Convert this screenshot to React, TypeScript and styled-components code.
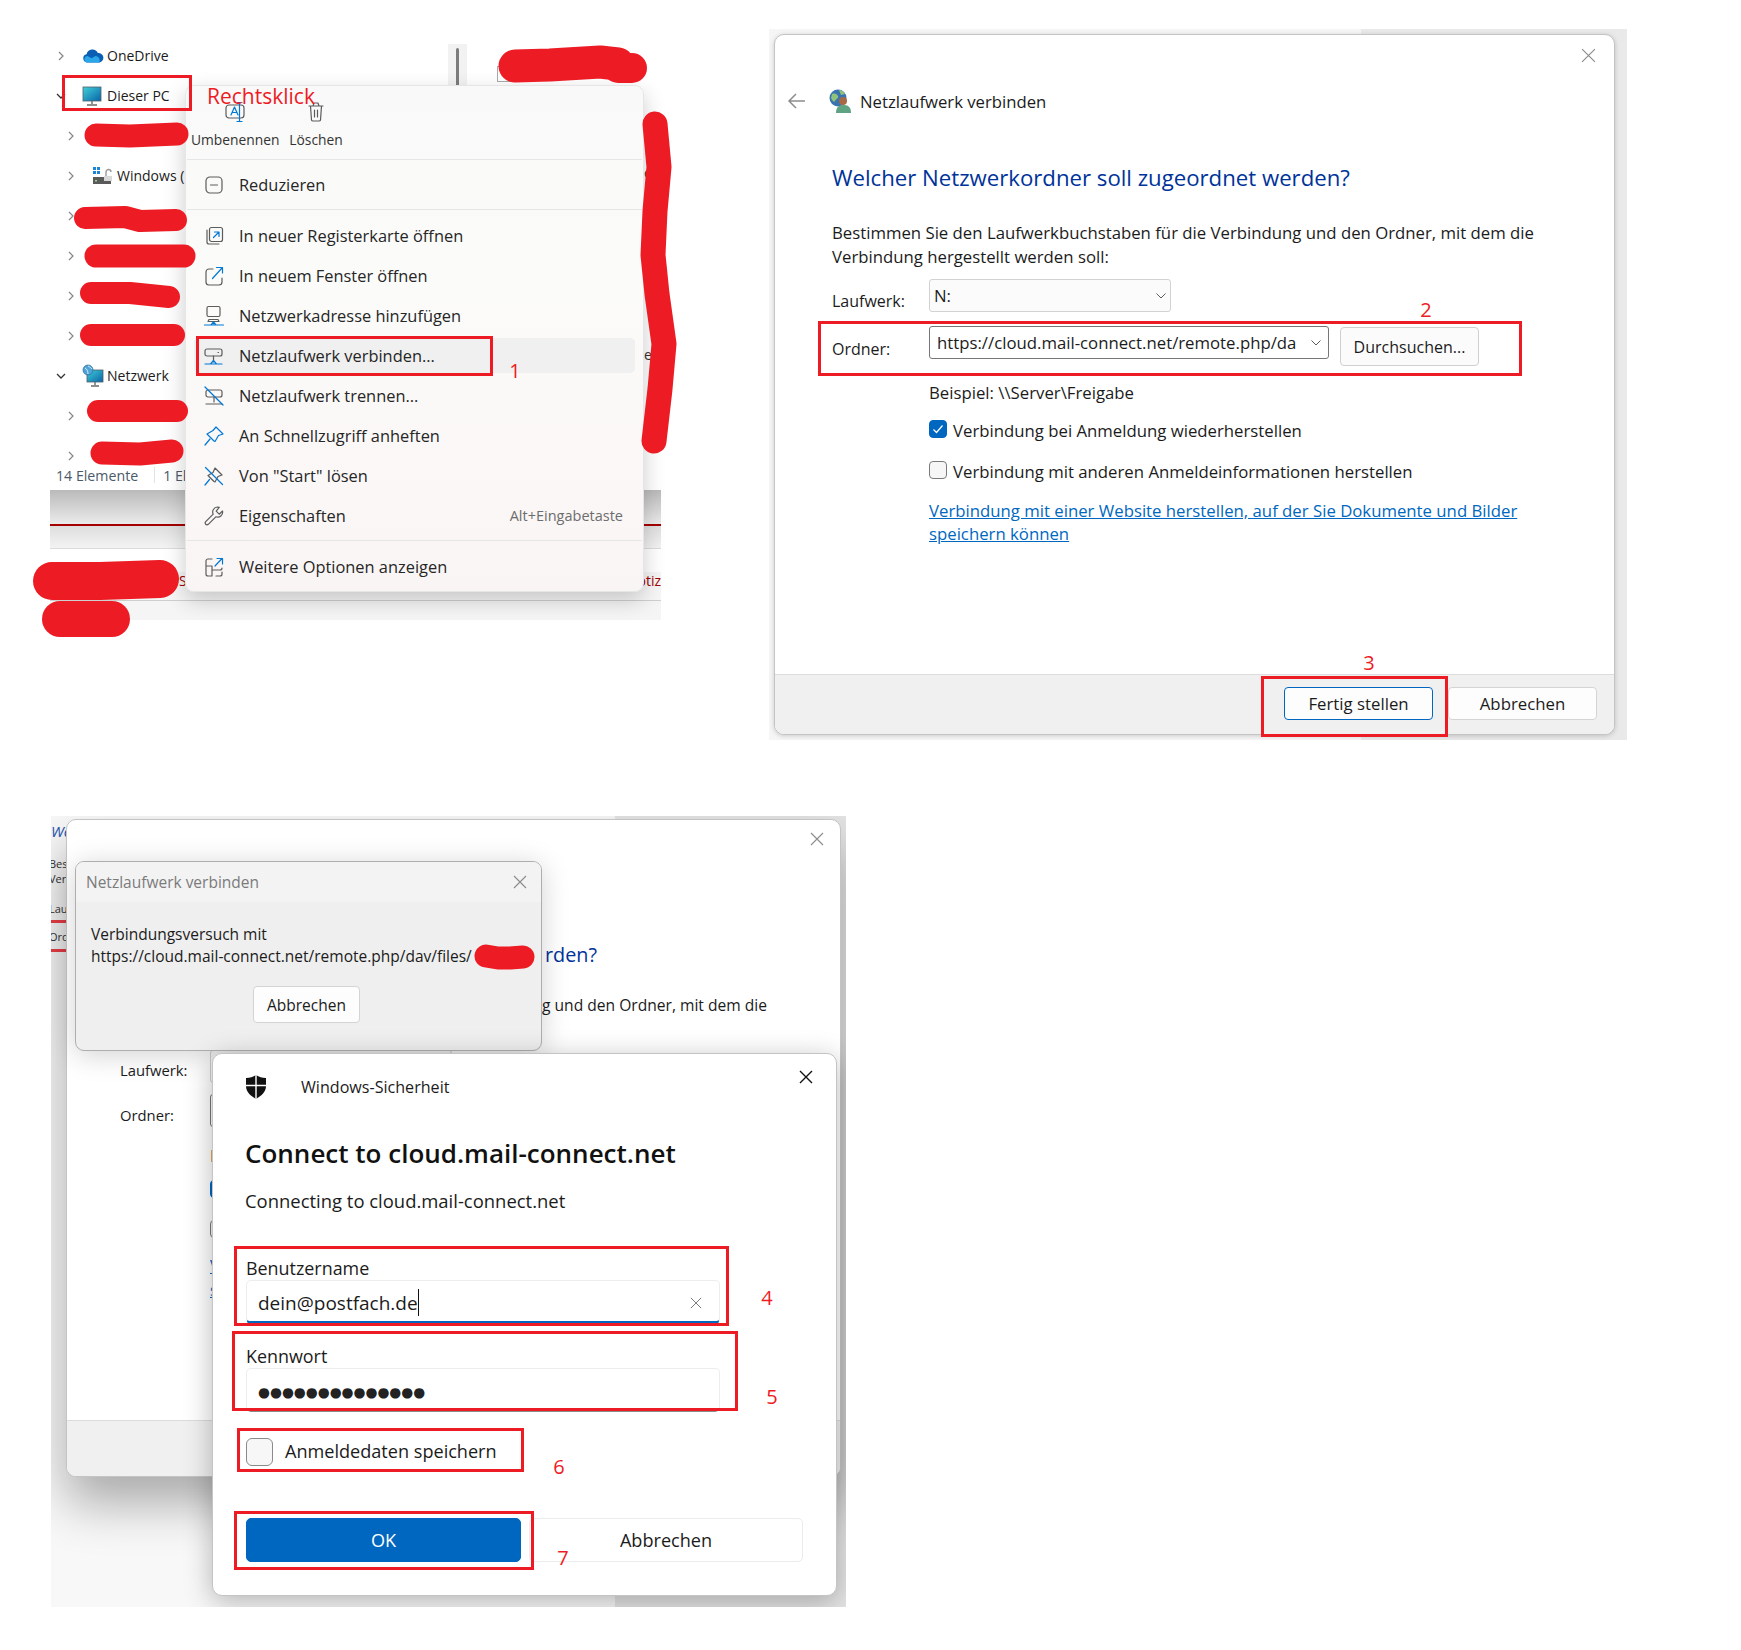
import React from 'react'
import styled, { createGlobalStyle } from 'styled-components'

const ui = `"Open Sans", "Noto Sans", "Liberation Sans", sans-serif`
const red = '#ed1c24'
const grey = '#5c5c5c'
const blue = '#0078d4'

const GlobalStyle = createGlobalStyle`
  html, body { margin: 0; background: #fff; }
  body { font-family: ${ui}; color: #1b1b1b; }
  * { box-sizing: border-box; }
`

const Page = styled.div`
  position: relative;
  width: 1741px;
  height: 1650px;
  overflow: hidden;
  background: #fff;
`

/* ---------- annotations on top of the screenshots ---------- */
const RedBox = styled.div<{ $x: number; $y: number; $w: number; $h: number }>`
  position: absolute;
  left: ${p => p.$x}px;
  top: ${p => p.$y}px;
  width: ${p => p.$w}px;
  height: ${p => p.$h}px;
  border: 3px solid ${red};
  z-index: 20;
`
const Note = styled.div<{ $x: number; $y: number; $size?: number }>`
  position: absolute;
  left: ${p => p.$x}px;
  top: ${p => p.$y}px;
  transform: translate(-50%, -50%);
  color: ${red};
  font-size: ${p => p.$size ?? 20}px;
  line-height: 1;
  white-space: nowrap;
  z-index: 20;
`
const ScribbleLayer = styled.svg`
  position: absolute;
  left: 0;
  top: 0;
  z-index: 21;
  pointer-events: none;
`

const scribbles: [string, number][] = [
  ['96,135 130,136 177,134', 23],
  ['85,218 125,217 140,221 176,220', 22],
  ['96,256 184,256', 23],
  ['91,293 130,293 169,297', 22],
  ['91,335 174,335', 22],
  ['98,411 177,411', 22],
  ['102,453 140,454 172,451', 23],
  ['515,66 550,65 600,62 618,64', 33],
  ['618,68 632,68', 30],
  ['655,124 659,167 655,211 653,255 657,294 664,344 660,389 654,441', 25],
  ['52,581 100,581 160,579', 38],
  ['60,619 112,619', 36],
  ['486,956 498,958 510,958 523,957', 23],
]

/* ---------- icons ---------- */
const Chevron = ({ open }: { open?: boolean }) => (
  <svg width="12" height="12" viewBox="0 0 12 12" fill="none" stroke={open ? '#333' : '#8a8a8a'} strokeWidth="1.3">
    <path d={open ? 'M2 4l4 4 4-4' : 'M4 2l4 4-4 4'} />
  </svg>
)
const CloudIcon = () => (
  <svg width="22" height="16" viewBox="0 0 24 16">
    <path fill="#0a5fb4" d="M5.5 15A4.5 4.5 0 0 1 5 6.1 6.5 6.5 0 0 1 17.3 4.8 5 5 0 0 1 19 15Z" />
    <path fill="#2aa5e8" d="M5 15a3.6 3.6 0 0 1 1-7l4.5 2.4 4-2.4a5 5 0 0 1 4.5 7Z" />
  </svg>
)
const MonitorIcon = () => (
  <svg width="20" height="22" viewBox="0 0 20 22">
    <defs>
      <linearGradient id="scr" x1="0" y1="0" x2="1" y2="1">
        <stop offset="0" stopColor="#3fd0d8" />
        <stop offset="1" stopColor="#0a63a8" />
      </linearGradient>
    </defs>
    <rect x="1" y="2" width="18" height="14" fill="url(#scr)" stroke="#50606a" strokeWidth=".8" />
    <path d="M10 16v3M5 20h10" stroke="#6a6a6a" strokeWidth="1.4" />
  </svg>
)
const NetIcon = () => (
  <svg width="22" height="24" viewBox="0 0 22 24">
    <rect x="5" y="6" width="16" height="12" fill="url(#scr)" stroke="#50606a" strokeWidth=".8" />
    <path d="M13 18v3M9 22h8" stroke="#6a6a6a" strokeWidth="1.4" />
    <circle cx="6" cy="6" r="5" fill="#4ea3d8" stroke="#2a6a98" strokeWidth=".7" />
    <path d="M3 4c2 1 3 3 3 6M6 2c2 1 3 2 4 3" stroke="#d6eefa" strokeWidth="1" fill="none" />
  </svg>
)
const DriveIcon = () => (
  <svg width="22" height="20" viewBox="0 0 22 20">
    <path fill="#1a86d8" d="M1 1h3v3H1zM5 1h3v3H5zM1 5h3v3H1zM5 5h3v3H5z" />
    <rect x="1" y="11" width="18" height="7" fill="#5a5a5a" />
    <rect x="3" y="14" width="2" height="1.5" fill="#7fe07f" />
    <path d="M12 10h8v5h-8z" fill="#d8d8d8" />
    <path d="M14 10V6a2.5 2.5 0 0 1 5 0" fill="none" stroke="#9a9a9a" strokeWidth="1.4" />
  </svg>
)
const MenuSvg = ({ children, size = 22 }: { children: React.ReactNode; size?: number }) => (
  <svg width={size} height={size} viewBox="0 0 22 22" fill="none" stroke={grey} strokeWidth="1.2" strokeLinecap="round" strokeLinejoin="round">
    {children}
  </svg>
)
const RenameIcon = () => (
  <MenuSvg>
    <rect x="2" y="4" width="18" height="13" rx="3" />
    <path d="M7 14l3.5-8 3.5 8M8.2 11.5h4.6" stroke={blue} />
    <path d="M15.5 1.5v19M13 1.5h5M13 20.5h5" stroke={blue} />
  </MenuSvg>
)
const TrashIcon = () => (
  <MenuSvg>
    <path d="M4 5h14M8 5l1-3h4l1 3M5.5 5l1 14a1.5 1.5 0 0 0 1.5 1h6a1.5 1.5 0 0 0 1.5-1l1-14M9.5 9v7M12.5 9v7" />
  </MenuSvg>
)
const CollapseIcon = () => (
  <MenuSvg>
    <rect x="3" y="3" width="16" height="16" rx="4" />
    <path d="M7.5 11h7" />
  </MenuSvg>
)
const NewTabIcon = () => (
  <MenuSvg>
    <path d="M4 5v12a2 2 0 0 0 2 2h10" />
    <rect x="6.5" y="2.5" width="13" height="14" rx="2" />
    <path d="M10.5 12.5l5-5M11.5 7h4.5v4.5" stroke={blue} />
  </MenuSvg>
)
const NewWindowIcon = () => (
  <MenuSvg>
    <path d="M10 4H6a3 3 0 0 0-3 3v10a3 3 0 0 0 3 3h10a3 3 0 0 0 3-3v-4" />
    <path d="M9.5 13.5L19 3M13.5 2.5H19.5V8" stroke={blue} />
  </MenuSvg>
)
const NetAddIcon = () => (
  <MenuSvg>
    <rect x="4" y="1.5" width="13" height="10" rx="1.5" />
    <path d="M6 14.5h9l1 2H5zM10.500 17v2" />
    <path d="M1.500 20h19M8 20l2.500-3 2.500 3z" stroke={blue} />
  </MenuSvg>
)
const MapDriveIcon = () => (
  <MenuSvg>
    <rect x="2" y="4" width="17" height="7" rx="2" />
    <path d="M15 7.500h.5M10.500 11v6" />
    <path d="M2 19h17M7.500 19l3-3.500 3 3.500z" stroke={blue} />
  </MenuSvg>
)
const DisconnectIcon = () => (
  <MenuSvg>
    <rect x="3" y="5" width="16" height="7" rx="2" />
    <path d="M11 12v5M3 19h16" />
    <path d="M2 2l18 18" stroke={blue} />
  </MenuSvg>
)
const PinIcon = () => (
  <MenuSvg>
    <path d="M13 2l7 7-4.500 1.500-3.500 6-1-.5-7-7 6-3.500z" stroke={blue} />
    <path d="M7 14l-5 6" stroke={blue} />
  </MenuSvg>
)
const UnpinIcon = () => (
  <MenuSvg>
    <path d="M12 3l7 7-4 1.500-3 5.500-1-.5-6-6 5-3z" />
    <path d="M6.500 14.500L2 20M2.500 2.500l17 17" stroke={blue} />
  </MenuSvg>
)
const WrenchIcon = () => (
  <MenuSvg>
    <path d="M14.500 2a5 5 0 0 0-4.300 7.200L2.700 16.700a2 2 0 0 0 0 2.600 2 2 0 0 0 2.600 0l7.500-7.500A5 5 0 0 0 19.500 6l-3.300 3.200-3-3L16.200 2.300a5 5 0 0 0-1.700-.3z" />
  </MenuSvg>
)
const MoreIcon = () => (
  <MenuSvg>
    <path d="M9 3H5a2 2 0 0 0-2 2v5h6v10M3 10v8a2 2 0 0 0 2 2h4M9 14h8a2 2 0 0 0 2-2v0M19 16v2a2 2 0 0 1-2 2h-4" />
    <path d="M12 10l7-7.500M14 2.500h5.500V8" stroke={blue} />
  </MenuSvg>
)
const BackArrow = () => (
  <svg width="20" height="18" viewBox="0 0 20 18" fill="none" stroke="#8d8d8d" strokeWidth="1.5">
    <path d="M18 9H2M9 2L2 9l7 7" />
  </svg>
)
const GlobeUserIcon = () => (
  <svg width="26" height="26" viewBox="0 0 26 26">
    <circle cx="10" cy="10" r="8.500" fill="#3a74b0" />
    <path d="M4 6c3-1 5 0 6 2s-2 3-3 5-3-1-4-3zM11 2c3 0 5 2 6 4l-4 1z" fill="#8fc27a" />
    <circle cx="15" cy="13" r="4" fill="#a56a45" />
    <path d="M8 25c0-6 3-8 8-8s7 3 7 8z" fill="#5fa383" />
  </svg>
)
const CloseX = ({ size = 14, color = '#8b8b8b', width = 1.100 }: { size?: number; color?: string; width?: number }) => (
  <svg width={size} height={size} viewBox="0 0 14 14" fill="none" stroke={color} strokeWidth={width}>
    <path d="M1 1l12 12M13 1L1 13" />
  </svg>
)
const SmallChevron = () => (
  <svg width="12" height="8" viewBox="0 0 12 8" fill="none" stroke="#5d5d5d" strokeWidth="1">
    <path d="M1.500 1.500L6 6l4.500-4.500" />
  </svg>
)
const ShieldIcon = () => (
  <svg width="22" height="26" viewBox="0 0 22 26">
    <path fill="#111" d="M11 1C8 3 5 4 1 4v8c0 6 5 10 10 13 5-3 10-7 10-13V4c-4 0-7-1-10-3Z" />
    <path stroke="#fff" strokeWidth="1.400" d="M11 1v24M1 11.500h20" />
  </svg>
)

/* ---------- explorer with context menu ---------- */
const ExplorerShot = styled.section`
  position: absolute;
  left: 50px;
  top: 36px;
  width: 611px;
  display: flex;
  flex-direction: column;
  font-size: 14px;
`
const Pane = styled.div`
  display: flex;
  height: 429px;
  overflow: hidden;
`
const Tree = styled.div`
  width: 398px;
`
const TreeRow = styled.div<{ $child?: boolean }>`
  display: flex;
  align-items: center;
  height: 40px;
  padding-left: ${p => (p.$child ? 15 : 5)}px;
`
const ChevronSlot = styled.span`
  display: flex;
  width: 27px;
`
const IconSlot = styled.span`
  display: flex;
  width: 25px;
`
const TreeLabel = styled.span`
  margin-top: -2px;
`
const Peek = styled.span`
  margin-left: 122px;
  color: #333;
`
const ScrollTrack = styled.div`
  width: 19px;
  margin-top: 8px;
  background: #f2f2f2;
  display: flex;
  justify-content: center;
`
const ScrollThumb = styled.div`
  width: 3px;
  height: 42px;
  margin-top: 4px;
  border-radius: 2px;
  background: #7c7c7c;
`
const RightPane = styled.div`
  flex: 1;
  padding: 30px 0 0 30px;
`
const TinyBox = styled.div`
  width: 14px;
  height: 16px;
  border: 1px solid #aaa;
`
const RightPeek = styled.span<{ $top: number }>`
  position: absolute;
  left: 594px;
  top: ${p => p.$top}px;
  color: #333;
  line-height: 20px;
  z-index: 1;
`
const StatusBar = styled.div`
  display: flex;
  align-items: center;
  height: 25px;
  padding: 0 0 5px 6px;
  color: #4a5a6a;
  font-size: 14.2px;
`
const StatusSep = styled.span`
  width: 1px;
  height: 16px;
  margin: 0 8px 0 16px;
  background: #e3e3e3;
`
const GreyBand = styled.div`
  height: 36px;
  background: linear-gradient(#bababa, #ebebeb);
  border-bottom: 2px solid #a40000;
`
const SubBand = styled.div`
  height: 23px;
  background: linear-gradient(#dedede, #f3f3f3);
  border-bottom: 1px solid #dcdcdc;
`
const NotesRow = styled.div`
  display: flex;
  justify-content: space-between;
  align-items: flex-end;
  height: 52px;
  padding: 0 0 10px 129px;
  overflow: hidden;
  background: linear-gradient(#fff 45%, #f6f6f6 45%);
  border-bottom: 1px solid #cfcfcf;
  color: #a00000;
  font-size: 14px;
`
const BottomBand = styled.div`
  height: 19px;
  background: #f5f5f5;
`
const ContextMenu = styled.div`
  position: absolute;
  left: 135px;
  top: 49px;
  width: 459px;
  background: linear-gradient(#f9f9f9, #fbfbf9 40%, #faf5f5);
  border: 1px solid #e6e6e6;
  border-radius: 9px;
  box-shadow: 0 8px 22px rgba(0, 0, 0, 0.2);
  z-index: 5;
`
const MenuTools = styled.div`
  display: flex;
  height: 73px;
  padding: 15px 0 0 5px;
  gap: 10px;
`
const ToolBtn = styled.div`
  display: flex;
  flex-direction: column;
  align-items: center;
  gap: 7px;
  font-size: 13.8px;
  line-height: 20px;
  color: #333;
`
const MenuLine = styled.div`
  height: 1px;
  margin: 0 1px;
  background: #e6e6e6;
`
const MenuGroup = styled.div<{ $top: number; $bottom: number }>`
  padding: ${p => p.$top}px 0 ${p => p.$bottom}px;
`
const MenuItem = styled.div<{ $active?: boolean }>`
  display: flex;
  align-items: center;
  height: 40px;
  margin: 0 8px;
  padding: 0 12px 0 9px;
  gap: 14px;
  font-size: 16.4px;
  color: #262626;
  border-top: 3px solid transparent;
  border-bottom: 2px solid transparent;
  background-clip: padding-box;
  border-radius: 6px;
  background-color: ${p => (p.$active ? '#f0f0f0' : 'transparent')};
`
const MenuItemIcon = styled.span`
  display: flex;
  flex: none;
`
const Shortcut = styled.span`
  margin-left: auto;
  font-size: 14.5px;
  color: #6d6d6d;
`

const menuItems: { label: string; icon: React.ReactNode; active?: boolean; shortcut?: string }[] = [
  { label: 'In neuer Registerkarte öffnen', icon: <NewTabIcon /> },
  { label: 'In neuem Fenster öffnen', icon: <NewWindowIcon /> },
  { label: 'Netzwerkadresse hinzufügen', icon: <NetAddIcon /> },
  { label: 'Netzlaufwerk verbinden...', icon: <MapDriveIcon />, active: true },
  { label: 'Netzlaufwerk trennen...', icon: <DisconnectIcon /> },
  { label: 'An Schnellzugriff anheften', icon: <PinIcon /> },
  { label: 'Von "Start" lösen', icon: <UnpinIcon /> },
  { label: 'Eigenschaften', icon: <WrenchIcon />, shortcut: 'Alt+Eingabetaste' },
]

const Explorer = () => (
  <ExplorerShot>
    <Pane>
      <Tree>
        <TreeRow>
          <ChevronSlot><Chevron /></ChevronSlot>
          <IconSlot><CloudIcon /></IconSlot>
          <TreeLabel>OneDrive</TreeLabel>
        </TreeRow>
        <TreeRow>
          <ChevronSlot><Chevron open /></ChevronSlot>
          <IconSlot><MonitorIcon /></IconSlot>
          <TreeLabel>Dieser PC</TreeLabel>
        </TreeRow>
        <TreeRow $child><ChevronSlot><Chevron /></ChevronSlot></TreeRow>
        <TreeRow $child>
          <ChevronSlot><Chevron /></ChevronSlot>
          <IconSlot><DriveIcon /></IconSlot>
          <TreeLabel>Windows (</TreeLabel>
        </TreeRow>
        <TreeRow $child><ChevronSlot><Chevron /></ChevronSlot></TreeRow>
        <TreeRow $child><ChevronSlot><Chevron /></ChevronSlot></TreeRow>
        <TreeRow $child><ChevronSlot><Chevron /></ChevronSlot><Peek>D</Peek></TreeRow>
        <TreeRow $child><ChevronSlot><Chevron /></ChevronSlot></TreeRow>
        <TreeRow>
          <ChevronSlot><Chevron open /></ChevronSlot>
          <IconSlot><NetIcon /></IconSlot>
          <TreeLabel>Netzwerk</TreeLabel>
        </TreeRow>
        <TreeRow $child><ChevronSlot><Chevron /></ChevronSlot></TreeRow>
        <TreeRow $child><ChevronSlot><Chevron /></ChevronSlot></TreeRow>
      </Tree>
      <ScrollTrack><ScrollThumb /></ScrollTrack>
      <RightPane><TinyBox /></RightPane>
    </Pane>
    <StatusBar>14 Elemente<StatusSep />1 El</StatusBar>
    <GreyBand />
    <SubBand />
    <NotesRow><span>S</span><span>otiz</span></NotesRow>
    <BottomBand />
    <RightPeek $top={127}>e</RightPeek>
    <RightPeek $top={309}>es</RightPeek>
    <ContextMenu>
      <MenuTools>
        <ToolBtn><RenameIcon />Umbenennen</ToolBtn>
        <ToolBtn><TrashIcon />Löschen</ToolBtn>
      </MenuTools>
      <MenuLine />
      <MenuGroup $top={4} $bottom={5}>
        <MenuItem><MenuItemIcon><CollapseIcon /></MenuItemIcon>Reduzieren</MenuItem>
      </MenuGroup>
      <MenuLine />
      <MenuGroup $top={5} $bottom={5}>
        {menuItems.map(item => (
          <MenuItem key={item.label} $active={item.active}>
            <MenuItemIcon>{item.icon}</MenuItemIcon>
            {item.label}
            {item.shortcut && <Shortcut>{item.shortcut}</Shortcut>}
          </MenuItem>
        ))}
      </MenuGroup>
      <MenuLine />
      <MenuGroup $top={5} $bottom={5}>
        <MenuItem><MenuItemIcon><MoreIcon /></MenuItemIcon>Weitere Optionen anzeigen</MenuItem>
      </MenuGroup>
    </ContextMenu>
  </ExplorerShot>
)

/* ---------- shared dialog parts ---------- */
const DialogFrame = styled.div`
  display: flex;
  flex-direction: column;
  background: #fff;
  border: 1px solid #c4c4c4;
  border-radius: 10px;
  overflow: hidden;
`
const DialogBody = styled.div`
  flex: 1;
  font-size: 16.75px;
`
const CloseRow = styled.div`
  display: flex;
  justify-content: flex-end;
  height: 42px;
  padding: 13px 18px 0 0;
`
const Heading = styled.h2`
  margin: 0;
  font-size: 22.2px;
  line-height: 32px;
  font-weight: 400;
  color: #003399;
  white-space: nowrap;
`
const Para = styled.p`
  margin: 27px 0 0;
  line-height: 23.5px;
  white-space: nowrap;
`
const FormRow = styled.div<{ $top: number; $h: number }>`
  display: grid;
  grid-template-columns: 97px auto 1fr;
  align-items: start;
  height: ${p => p.$h}px;
  margin-top: ${p => p.$top}px;
`
const RowLabel = styled.span<{ $drop?: number }>`
  padding-top: ${p => p.$drop ?? 10}px;
  font-size: 16px;
  line-height: 24px;
`
const Combo = styled.div<{ $w: number; $dark?: boolean }>`
  display: flex;
  align-items: center;
  justify-content: space-between;
  width: ${p => p.$w}px;
  height: 33px;
  padding: 0 ${p => (p.$dark ? 6 : 3)}px 0 ${p => (p.$dark ? 7 : 4)}px;
  background: ${p => (p.$dark ? '#fff' : '#fbfbfb')};
  border: 1px solid ${p => (p.$dark ? '#767676' : '#d2d2d2')};
  border-radius: 3px;
  white-space: nowrap;
`
const ComboText = styled.span`
  overflow: hidden;
  margin-right: 8px;
`
const SideBtn = styled.div`
  display: flex;
  align-items: center;
  justify-content: center;
  width: 139px;
  height: 39px;
  margin: 1px 0 0 11px;
  background: #fbfbfb;
  border: 1px solid #d0d0d0;
  border-radius: 4px;
  font-size: 16px;
`
const Indented = styled.div`
  margin-left: 97px;
`
const Hint = styled(Indented)`
  margin-top: 15px;
  line-height: 23px;
`
const CheckRow = styled(Indented)<{ $top: number }>`
  display: flex;
  align-items: center;
  gap: 6px;
  height: 24px;
  margin-top: ${p => p.$top}px;
  white-space: nowrap;
`
const CheckBox = styled.span<{ $on?: boolean }>`
  display: flex;
  align-items: center;
  justify-content: center;
  flex: none;
  width: 18px;
  height: 18px;
  margin-top: -2px;
  border-radius: 4px;
  border: 1px solid ${p => (p.$on ? '#0067c0' : '#7a7a7a')};
  background: ${p => (p.$on ? '#0067c0' : '#f6f6f6')};
`
const LinkText = styled.a`
  display: block;
  width: 600px;
  margin: 16px 0 0 97px;
  line-height: 23px;
  color: #0067c0;
  text-decoration: underline;
`
const DialogFooter = styled.div<{ $h: number }>`
  display: flex;
  justify-content: flex-end;
  gap: 15px;
  height: ${p => p.$h}px;
  padding: 12px 17px 0 0;
  background: #f0f0f0;
  border-top: 1px solid #dcdcdc;
`
const FootBtn = styled.div<{ $w: number; $primary?: boolean }>`
  display: flex;
  align-items: center;
  justify-content: center;
  width: ${p => p.$w}px;
  height: 33px;
  background: #fdfdfd;
  border: 1px solid ${p => (p.$primary ? '#0067c0' : '#d4d4d4')};
  border-radius: 4px;
  font-size: 16.8px;
`

const CheckMark = () => (
  <svg width="12" height="10" viewBox="0 0 12 10" fill="none" stroke="#fff" strokeWidth="1.200">
    <path d="M1.500 5.500L4.500 8.500 10.500 1.500" />
  </svg>
)

/* ---------- map drive wizard ---------- */
const WizardShot = styled.section`
  position: absolute;
  left: 769px;
  top: 29px;
  display: flex;
  width: 858px;
  height: 711px;
  padding: 5px 12px 5px 5px;
  background: linear-gradient(90deg, #f6f6f6 0 69%, #e9e9e9 69%);
`
const WizardFrame = styled(DialogFrame)`
  flex: 1;
  box-shadow: 0 1px 5px rgba(0, 0, 0, 0.18);
`
const WizardTitle = styled.div`
  display: flex;
  align-items: center;
  height: 48px;
  padding-left: 12px;
  font-size: 16.7px;
`
const TitleBack = styled.span`
  display: flex;
  width: 41px;
`
const TitleIcon = styled.span`
  display: flex;
  width: 32px;
`
const WizardContent = styled.div`
  padding: 37px 0 0 57px;
`

const Wizard = () => (
  <WizardShot>
    <WizardFrame>
      <DialogBody>
        <CloseRow><CloseX size={15} /></CloseRow>
        <WizardTitle>
          <TitleBack><BackArrow /></TitleBack>
          <TitleIcon><GlobeUserIcon /></TitleIcon>
          Netzlaufwerk verbinden
        </WizardTitle>
        <WizardContent>
          <Heading>Welcher Netzwerkordner soll zugeordnet werden?</Heading>
          <Para>
            Bestimmen Sie den Laufwerkbuchstaben für die Verbindung und den Ordner, mit dem die<br />
            Verbindung hergestellt werden soll:
          </Para>
          <FormRow $top={11} $h={33}>
            <RowLabel>Laufwerk:</RowLabel>
            <Combo $w={242}>N:<SmallChevron /></Combo>
          </FormRow>
          <FormRow $top={14} $h={40}>
            <RowLabel $drop={11}>Ordner:</RowLabel>
            <Combo $w={400} $dark>
              <ComboText>https://cloud.mail-connect.net/remote.php/da</ComboText>
              <SmallChevron />
            </Combo>
            <SideBtn>Durchsuchen...</SideBtn>
          </FormRow>
          <Hint>Beispiel: \\Server\Freigabe</Hint>
          <CheckRow $top={14}><CheckBox $on><CheckMark /></CheckBox>Verbindung bei Anmeldung wiederherstellen</CheckRow>
          <CheckRow $top={17}><CheckBox />Verbindung mit anderen Anmeldeinformationen herstellen</CheckRow>
          <LinkText>Verbindung mit einer Website herstellen, auf der Sie Dokumente und Bilder speichern können</LinkText>
        </WizardContent>
      </DialogBody>
      <DialogFooter $h={60}>
        <FootBtn $w={149} $primary>Fertig stellen</FootBtn>
        <FootBtn $w={149}>Abbrechen</FootBtn>
      </DialogFooter>
    </WizardFrame>
  </WizardShot>
)

/* ---------- connecting + credentials ---------- */
const ConnectShot = styled.section`
  position: absolute;
  left: 51px;
  top: 816px;
  display: flex;
  width: 795px;
  height: 791px;
  padding-top: 3px;
  overflow: hidden;
  background: linear-gradient(90deg, #f8f8f8 0 71%, #e4e4e4 71%);
`
const BackStrip = styled.div`
  width: 15px;
  flex: none;
  overflow: hidden;
  font-size: 11px;
  color: #333;
  white-space: nowrap;
`
const StripHeading = styled.div`
  margin-top: 2px;
  font-size: 15px;
  font-style: italic;
  color: #1e56b0;
`
const StripText = styled.div<{ $top: number }>`
  margin: ${p => p.$top}px 0 0 -2px;
  line-height: 14px;
`
const StripRule = styled.div<{ $top: number }>`
  height: 3px;
  margin-top: ${p => p.$top}px;
  background: #ee4048;
`
const BackDialog = styled(DialogFrame)`
  width: 775px;
  height: 658px;
  flex: none;
  box-shadow: 0 26px 50px rgba(0, 0, 0, 0.32);
`
const BackClose = styled(CloseRow)`
  padding: 12px 16px 0 0;
`
const BackContent = styled.div`
  padding-top: 77px;
`
const BackHeading = styled(Heading)`
  margin-left: 478px;
  font-size: 19.8px;
`
const BackPara = styled(Para)`
  margin: 23px 0 0 475px;
  font-size: 15.6px;
`
const BackForm = styled.div`
  margin: 32px 0 0 53px;
`
const BackRow = styled(FormRow)`
  grid-template-columns: 90px auto 1fr;
`
const BackLabel = styled(RowLabel)`
  font-size: 14.8px;
`
const BackPeek = styled.div<{ $top: number; $link?: boolean }>`
  width: 4px;
  margin: ${p => p.$top}px 0 0 90px;
  overflow: hidden;
  line-height: 23px;
  color: ${p => (p.$link ? '#0067c0' : '#1b1b1b')};
  text-decoration: ${p => (p.$link ? 'underline' : 'none')};
`
const BackCheck = styled.div<{ $top: number }>`
  display: flex;
  align-items: center;
  height: 24px;
  margin: ${p => p.$top}px 0 0 90px;
`

const Popup = styled.div`
  position: absolute;
  left: 24px;
  top: 45px;
  width: 467px;
  height: 190px;
  display: flex;
  flex-direction: column;
  background: #efefef;
  border: 1px solid #aeaeae;
  border-radius: 9px;
  box-shadow: 0 4px 28px rgba(0, 0, 0, 0.18);
  overflow: hidden;
  z-index: 3;
  font-size: 15.5px;
`
const PopupBar = styled.div`
  display: flex;
  align-items: center;
  justify-content: space-between;
  flex: none;
  height: 40px;
  padding: 0 14px 0 10px;
  background: #f3f3f3;
  color: #7b7b7b;
`
const PopupBody = styled.div`
  padding: 21px 0 0 15px;
  line-height: 22px;
  white-space: nowrap;
`
const PopupBtn = styled.div`
  display: flex;
  align-items: center;
  justify-content: center;
  width: 107px;
  height: 37px;
  margin: 19px 0 0 177px;
  background: #fdfdfd;
  border: 1px solid #d4d4d4;
  border-radius: 4px;
`
const Security = styled.div`
  position: absolute;
  left: 161px;
  top: 237px;
  width: 625px;
  height: 543px;
  padding: 18px 23px 0 32px;
  background: #fff;
  border: 1px solid #c4c4c4;
  border-radius: 10px;
  box-shadow: 0 6px 28px rgba(0, 0, 0, 0.28);
  z-index: 4;
  font-size: 17.9px;
`
const SecurityHeader = styled.div`
  display: flex;
  align-items: center;
  height: 30px;
  font-size: 16.100px;
`
const ShieldSlot = styled.span`
  display: flex;
  width: 56px;
`
const SecurityClose = styled.span`
  display: flex;
  align-self: flex-start;
  margin: -2px 0 0 auto;
`
const SecurityTitle = styled.h2`
  margin: 33px 0 0;
  font-size: 26px;
  line-height: 36px;
  font-weight: 600;
  color: #111;
  white-space: nowrap;
`
const SecuritySub = styled.div`
  margin-top: 18px;
  font-size: 18.460px;
  line-height: 24px;
`
const FieldLabel = styled.div<{ $top: number }>`
  margin: ${p => p.$top}px 0 0 1px;
  line-height: 24px;
`
const TextField = styled.div<{ $focus?: boolean }>`
  display: flex;
  align-items: center;
  width: 474px;
  height: 44px;
  margin-left: 1px;
  padding: ${p => (p.$focus ? 3 : 4)}px 17px 0 11px;
  border: 1px solid #ededed;
  border-bottom: ${p => (p.$focus ? '3px solid #0067c0' : '1px solid #8a8a8a')};
  border-radius: 5px;
  background: #fff;
  font-size: 19px;
`
const Caret = styled.span`
  width: 1px;
  height: 27px;
  background: #111;
`
const FieldClear = styled.span`
  display: flex;
  margin-left: auto;
`
const Dots = styled.span`
  font-family: "DejaVu Sans", sans-serif;
  font-size: 13.700px;
  color: #222;
`
const SaveRow = styled.div`
  display: flex;
  align-items: center;
  gap: 12px;
  height: 28px;
  margin: 26px 0 0 1px;
  font-size: 18.1px;
`
const SaveBox = styled.span`
  flex: none;
  width: 27px;
  height: 28px;
  background: #f7f7f7;
  border: 1px solid #8a8a8a;
  border-radius: 6px;
`
const SaveText = styled.span`
  margin-top: -2px;
`
const ActionRow = styled.div`
  display: flex;
  gap: 8px;
  margin: 52px 0 0 1px;
  font-size: 18.1px;
`
const ActionBtn = styled.div<{ $w: number; $primary?: boolean }>`
  display: flex;
  align-items: center;
  justify-content: center;
  width: ${p => p.$w}px;
  height: 44px;
  border-radius: 5px;
  background: ${p => (p.$primary ? '#0067c0' : '#fff')};
  color: ${p => (p.$primary ? '#fff' : '#1b1b1b')};
  border: 1px solid ${p => (p.$primary ? '#0067c0' : '#ececec')};
`

const Connect = () => (
  <ConnectShot>
    <BackStrip>
      <StripHeading>We</StripHeading>
      <StripText $top={16}>Bes</StripText>
      <StripText $top={1}>Ver</StripText>
      <StripText $top={16}>Lau</StripText>
      <StripRule $top={4} />
      <StripText $top={7}>Ord</StripText>
      <StripRule $top={5} />
    </BackStrip>
    <BackDialog>
      <DialogBody>
        <BackClose><CloseX size={14} /></BackClose>
        <BackContent>
          <BackHeading>rden?</BackHeading>
          <BackPara>g und den Ordner, mit dem die</BackPara>
          <BackForm>
            <BackRow $top={0} $h={33}>
              <BackLabel $drop={8}>Laufwerk:</BackLabel>
              <Combo $w={242} />
            </BackRow>
            <BackRow $top={11} $h={33}>
              <BackLabel $drop={9}>Ordner:</BackLabel>
              <Combo $w={400} $dark />
            </BackRow>
            <BackPeek $top={17}>B</BackPeek>
            <BackCheck $top={11}><CheckBox $on /></BackCheck>
            <BackCheck $top={16}><CheckBox /></BackCheck>
            <BackPeek $top={12} $link>V</BackPeek>
            <BackPeek $top={1} $link>s</BackPeek>
          </BackForm>
        </BackContent>
      </DialogBody>
      <DialogFooter $h={56} />
    </BackDialog>
    <Popup>
      <PopupBar>Netzlaufwerk verbinden<CloseX size={14} /></PopupBar>
      <PopupBody>
        Verbindungsversuch mit<br />
        https://cloud.mail-connect.net/remote.php/dav/files/
      </PopupBody>
      <PopupBtn>Abbrechen</PopupBtn>
    </Popup>
    <Security>
      <SecurityHeader>
        <ShieldSlot><ShieldIcon /></ShieldSlot>
        Windows-Sicherheit
        <SecurityClose><CloseX size={14} color="#111" width={1.400} /></SecurityClose>
      </SecurityHeader>
      <SecurityTitle>Connect to cloud.mail-connect.net</SecurityTitle>
      <SecuritySub>Connecting to cloud.mail-connect.net</SecuritySub>
      <FieldLabel $top={43}>Benutzername</FieldLabel>
      <TextField $focus>
        dein@postfach.de<Caret />
        <FieldClear><CloseX size={12} color="#666" width={1} /></FieldClear>
      </TextField>
      <FieldLabel $top={20}>Kennwort</FieldLabel>
      <TextField><Dots>●●●●●●●●●●●●●●</Dots></TextField>
      <SaveRow><SaveBox /><SaveText>Anmeldedaten speichern</SaveText></SaveRow>
      <ActionRow>
        <ActionBtn $w={275} $primary>OK</ActionBtn>
        <ActionBtn $w={274}>Abbrechen</ActionBtn>
      </ActionRow>
    </Security>
  </ConnectShot>
)

export default function App() {
  return (
    <Page>
      <GlobalStyle />
      <Explorer />
      <Wizard />
      <Connect />

      <RedBox $x={62} $y={75} $w={130} $h={36} />
      <Note $x={261} $y={96} $size={21}>Rechtsklick</Note>
      <RedBox $x={196} $y={336} $w={297} $h={40} />
      <Note $x={515} $y={371}>1</Note>
      <RedBox $x={818} $y={321} $w={704} $h={55} />
      <Note $x={1426} $y={310}>2</Note>
      <RedBox $x={1261} $y={676} $w={187} $h={61} />
      <Note $x={1369} $y={663}>3</Note>
      <RedBox $x={234} $y={1246} $w={495} $h={80} />
      <Note $x={767} $y={1298}>4</Note>
      <RedBox $x={232} $y={1331} $w={506} $h={80} />
      <Note $x={772} $y={1397}>5</Note>
      <RedBox $x={237} $y={1428} $w={287} $h={44} />
      <Note $x={559} $y={1467}>6</Note>
      <RedBox $x={234} $y={1511} $w={300} $h={59} />
      <Note $x={563} $y={1558}>7</Note>

      <ScribbleLayer width="1741" height="1650" viewBox="0 0 1741 1650" fill="none" stroke={red} strokeLinecap="round" strokeLinejoin="round">
        {scribbles.map(([points, width]) => (
          <polyline key={points} points={points} strokeWidth={width} />
        ))}
      </ScribbleLayer>
    </Page>
  )
}
